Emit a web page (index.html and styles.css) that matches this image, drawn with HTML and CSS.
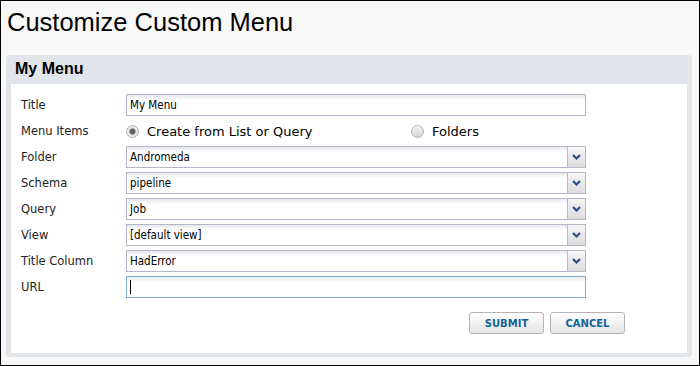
FILE: index.html
```html
<!DOCTYPE html>
<html lang="en">
<head>
    <meta charset="UTF-8">
    <meta name="viewport" content="width=device-width, initial-scale=1.0">
    <title>Customize Custom Menu</title>
    <link rel="stylesheet" href="styles.css">
</head>
<body>
<div class="frame">
    <h1 class="page-title">Customize Custom Menu</h1>
    <div class="panel">
        <div class="panel-header">My Menu</div>
        <div class="panel-body">
            <form class="menu-form">
                <div class="form-row">
                    <label class="form-label">Title</label>
                    <div class="field">My Menu</div>
                </div>
                <div class="form-row">
                    <label class="form-label">Menu Items</label>
                    <div class="radio-group">
                        <span class="radio-option first">
                            <span class="radio checked"></span>
                            Create from List or Query
                        </span>
                        <span class="radio-option">
                            <span class="radio"></span>
                            Folders
                        </span>
                    </div>
                </div>
                <div class="form-row">
                    <label class="form-label">Folder</label>
                    <div class="field combo">
                        <span class="combo-text">Andromeda</span>
                        <span class="trigger"><svg width="9" height="6" viewBox="0 0 9 6"><polyline points="1,1 4.5,4.5 8,1" fill="none" stroke="#2b4f8c" stroke-width="2.2"/></svg></span>
                    </div>
                </div>
                <div class="form-row">
                    <label class="form-label">Schema</label>
                    <div class="field combo">
                        <span class="combo-text">pipeline</span>
                        <span class="trigger"><svg width="9" height="6" viewBox="0 0 9 6"><polyline points="1,1 4.5,4.5 8,1" fill="none" stroke="#2b4f8c" stroke-width="2.2"/></svg></span>
                    </div>
                </div>
                <div class="form-row">
                    <label class="form-label">Query</label>
                    <div class="field combo">
                        <span class="combo-text">Job</span>
                        <span class="trigger"><svg width="9" height="6" viewBox="0 0 9 6"><polyline points="1,1 4.5,4.5 8,1" fill="none" stroke="#2b4f8c" stroke-width="2.2"/></svg></span>
                    </div>
                </div>
                <div class="form-row">
                    <label class="form-label">View</label>
                    <div class="field combo">
                        <span class="combo-text">[default view]</span>
                        <span class="trigger"><svg width="9" height="6" viewBox="0 0 9 6"><polyline points="1,1 4.5,4.5 8,1" fill="none" stroke="#2b4f8c" stroke-width="2.2"/></svg></span>
                    </div>
                </div>
                <div class="form-row">
                    <label class="form-label">Title Column</label>
                    <div class="field combo">
                        <span class="combo-text">HadError</span>
                        <span class="trigger"><svg width="9" height="6" viewBox="0 0 9 6"><polyline points="1,1 4.5,4.5 8,1" fill="none" stroke="#2b4f8c" stroke-width="2.2"/></svg></span>
                    </div>
                </div>
                <div class="form-row">
                    <label class="form-label">URL</label>
                    <div class="field focused"><span class="caret"></span></div>
                </div>
                <div class="form-actions">
                    <button type="submit" class="btn">SUBMIT</button>
                    <button type="button" class="btn">CANCEL</button>
                </div>
            </form>
        </div>
    </div>
</div>
</body>
</html>
```

FILE: styles.css
```css
body {
    margin: 0;
    padding: 0;
    font-family: "DejaVu Sans", Verdana, sans-serif;
}
.frame {
    width: 700px;
    height: 366px;
    box-sizing: border-box;
    border: 1px solid #000;
    background: #f8f8f8;
    overflow: hidden;
}
.page-title {
    margin: 0;
    padding: 5px 0 0 6px;
    font-family: "Liberation Sans", Arial, sans-serif;
    font-size: 25.5px;
    font-weight: normal;
    line-height: 32px;
    color: #000;
}
.panel {
    margin: 17px 7px 0 5px;
    padding: 0 5px 4px 5px;
    background: #e1e5e9;
    border-radius: 4px;
}
.panel-header {
    height: 29px;
    padding-left: 4px;
    font-family: "Liberation Sans", Arial, sans-serif;
    font-size: 16px;
    font-weight: bold;
    line-height: 27px;
    color: #000;
}
.panel-body {
    background: #fff;
    padding: 10px 10px 19px 10px;
}
.form-row {
    display: flex;
    height: 22px;
    margin-bottom: 4px;
}
.form-label {
    width: 105px;
    flex: none;
    font-size: 11.5px;
    line-height: 22px;
    color: #222;
}
.field {
    width: 460px;
    height: 22px;
    box-sizing: border-box;
    border: 1px solid #b5b8c8;
    background: linear-gradient(to bottom, #e6e9ec 0, #fff 5px);
    padding-left: 3px;
    font-family: "DejaVu Sans Condensed", "DejaVu Sans", sans-serif;
    font-stretch: condensed;
    font-size: 11.5px;
    line-height: 20px;
    color: #000;
}
.combo {
    display: flex;
    padding-right: 0;
}
.combo-text {
    flex: 1;
}
.trigger {
    width: 17px;
    flex: none;
    border-left: 1px solid #b5b8c8;
    background: linear-gradient(to bottom, #f6f6f6, #dcdcdc);
    display: flex;
    align-items: center;
    justify-content: center;
}
.focused {
    border-color: #7eadd9;
    display: flex;
    align-items: center;
}
.caret {
    width: 1px;
    height: 14px;
    background: #000;
}
.radio-group {
    display: flex;
    align-items: center;
    font-size: 13px;
    color: #000;
}
.radio-option {
    display: flex;
    align-items: center;
    gap: 8px;
}
.radio-option.first {
    width: 285px;
}
.radio {
    width: 13px;
    height: 13px;
    box-sizing: border-box;
    border-radius: 50%;
    border: 1px solid #b4b4b4;
    background: linear-gradient(to bottom, #f2f2f2, #d6d6d6);
}
.radio.checked {
    background: radial-gradient(circle, #555 0, #666 2.5px, #dcdcdc 3.5px, #f2f2f2 6px);
}
.form-actions {
    display: flex;
    justify-content: flex-end;
    gap: 6px;
    width: 604px;
    margin-top: 14px;
}
.btn {
    width: 75px;
    height: 22px;
    padding: 0;
    border: 1px solid #b4b4b4;
    border-radius: 3px;
    background: linear-gradient(to bottom, #fff, #e4e4e4);
    font-family: "DejaVu Sans", Verdana, sans-serif;
    font-size: 10px;
    font-weight: bold;
    color: #126495;
    cursor: pointer;
}
```
